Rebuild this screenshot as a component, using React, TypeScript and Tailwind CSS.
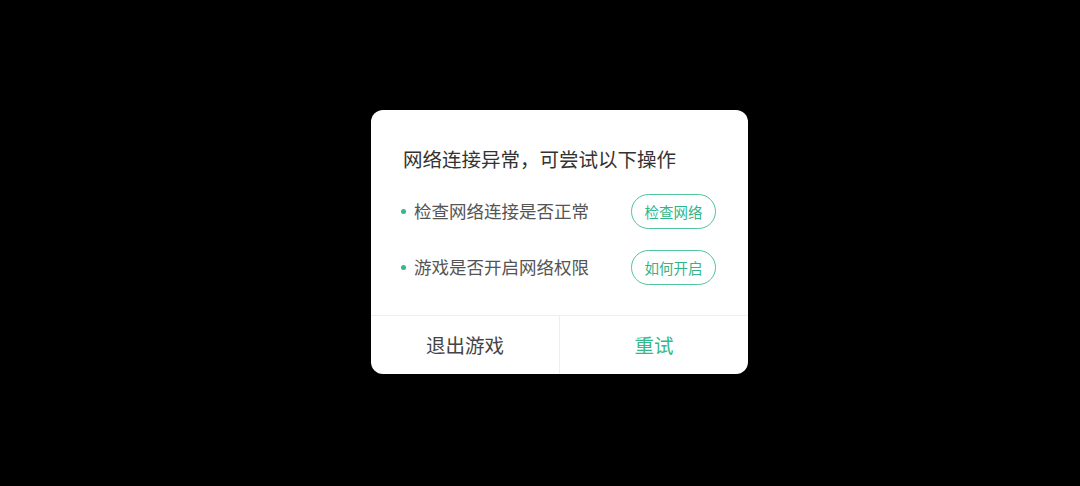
export default function App() {
  const rows = [
    { label: '检查网络连接是否正常', action: '检查网络' },
    { label: '游戏是否开启网络权限', action: '如何开启' },
  ];

  return (
    <div
      className="w-[1080px] h-[486px] bg-black flex items-start pt-[110px] pl-[371px]"
      style={{ fontFamily: '"Noto Sans CJK SC", "Noto Sans", sans-serif' }}
    >
      <div className="w-[377px] bg-white rounded-[12px] overflow-hidden">
        {/* Body */}
        <div className="pt-[35px] pb-[30px] px-[32px]">
          <h2 className="text-[19.5px] leading-[28px] text-[#333333] h-[28px]">
            网络连接异常，可尝试以下操作
          </h2>
          <div className="flex flex-col gap-[21px] mt-[21px]">
            {rows.map((row) => (
              <div key={row.action} className="flex items-center justify-between h-[35px]">
                <div className="flex items-center gap-[8px] -ml-[2px]">
                  <span className="w-[5px] h-[5px] rounded-full bg-[#33b98a]" />
                  <span className="text-[17.5px] text-[#555555]">{row.label}</span>
                </div>
                <button className="w-[85px] h-[35px] rounded-full border-[1.5px] border-[#4fc49b] text-[14.5px] text-[#2fb587] flex items-center justify-center">
                  {row.action}
                </button>
              </div>
            ))}
          </div>
        </div>

        {/* Footer */}
        <div className="border-t border-[#eeeeee] flex h-[59px]">
          <button className="flex-1 text-[19.5px] text-[#444444] border-r border-[#eeeeee]">
            退出游戏
          </button>
          <button className="flex-1 text-[19.5px] text-[#33b98a]">重试</button>
        </div>
      </div>
    </div>
  );
}
